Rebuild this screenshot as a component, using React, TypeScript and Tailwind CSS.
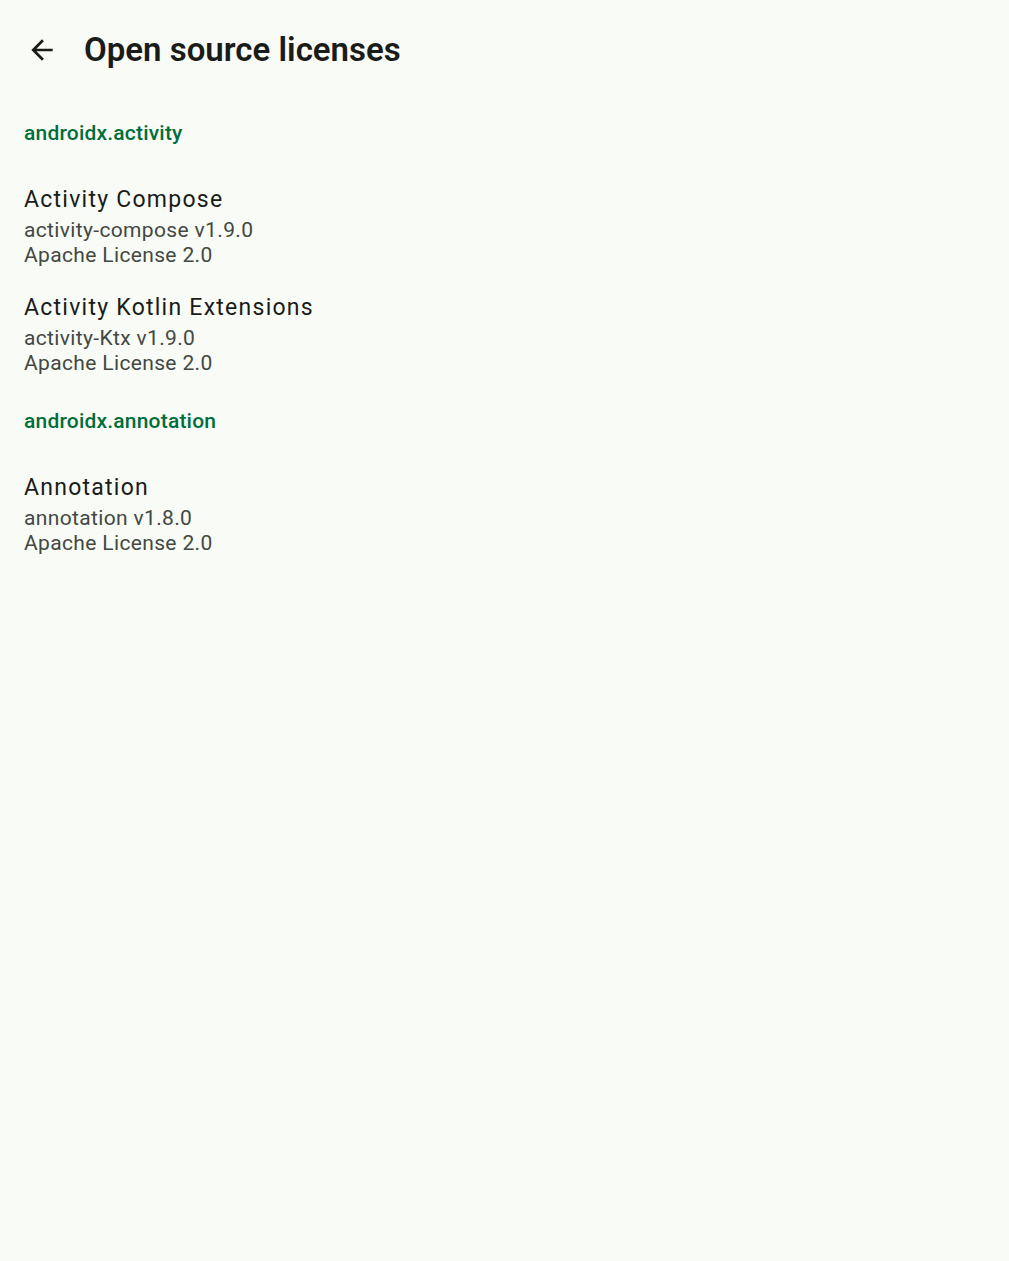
import React from "react";

const sections = [
  {
    group: "androidx.activity",
    items: [
      { name: "Activity Compose", artifact: "activity-compose v1.9.0", license: "Apache License 2.0" },
      { name: "Activity Kotlin Extensions", artifact: "activity-Ktx v1.9.0", license: "Apache License 2.0" },
    ],
  },
  {
    group: "androidx.annotation",
    items: [{ name: "Annotation", artifact: "annotation v1.8.0", license: "Apache License 2.0" }],
  },
];

export default function App() {
  return (
    <div
      className="min-h-[1261px] w-full bg-[#f9fbf6] text-[#1a1c19]"
      style={{ fontFamily: "Roboto, 'Noto Sans', sans-serif" }}
    >
      <div className="flex h-[100px] items-center">
        <div className="flex w-[84px] items-center justify-center">
          <svg width="32" height="32" viewBox="0 0 24 24" className="text-[#1a1c19]">
            <path d="M20 11H7.83l5.59-5.59L12 4l-8 8 8 8 1.41-1.41L7.83 13H20v-2z" fill="currentColor" />
          </svg>
        </div>
        <h1 className="text-[33px] font-semibold leading-[40px]">Open source licenses</h1>
      </div>
      {sections.map((s) => (
        <div key={s.group}>
          <div className="px-6 pt-[19px] pb-[25px] text-[21px] font-medium leading-[28px] tracking-[0.2px] text-[#006d3b]">
            {s.group}
          </div>
          {s.items.map((it) => (
            <div key={it.name} className="px-6 py-[13px]">
              <div className="mb-[3px] text-[23px] leading-[30px] tracking-[1.25px] text-[#1a1c19]">{it.name}</div>
              <div className="text-[21px] leading-[24.5px] tracking-[0.35px] text-[#434842]">{it.artifact}</div>
              <div className="text-[21px] leading-[24.5px] tracking-[0.35px] text-[#434842]">{it.license}</div>
            </div>
          ))}
        </div>
      ))}
    </div>
  );
}
